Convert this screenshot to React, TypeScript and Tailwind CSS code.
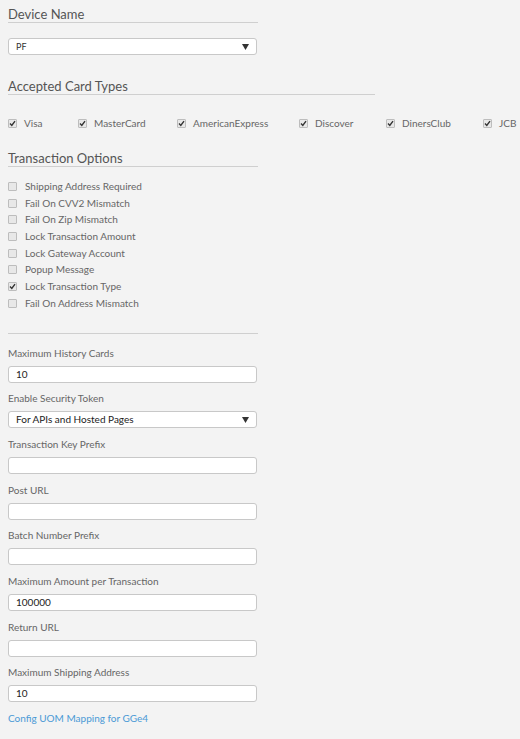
import React from 'react'

const cardTypes = [
  { name: 'Visa', w: 'w-[70px]' },
  { name: 'MasterCard', w: 'w-[99px]' },
  { name: 'AmericanExpress', w: 'w-[122px]' },
  { name: 'Discover', w: 'w-[87px]' },
  { name: 'DinersClub', w: 'w-[97px]' },
  { name: 'JCB', w: 'w-[30px]' },
]

const options = [
  { label: 'Shipping Address Required', checked: false },
  { label: 'Fail On CVV2 Mismatch', checked: false },
  { label: 'Fail On Zip Mismatch', checked: false },
  { label: 'Lock Transaction Amount', checked: false },
  { label: 'Lock Gateway Account', checked: false },
  { label: 'Popup Message', checked: false },
  { label: 'Lock Transaction Type', checked: true },
  { label: 'Fail On Address Mismatch', checked: false },
]

const fields = [
  { label: 'Maximum History Cards', value: '10' },
  { label: 'Enable Security Token', value: 'For APIs and Hosted Pages', select: true },
  { label: 'Transaction Key Prefix', value: '' },
  { label: 'Post URL', value: '' },
  { label: 'Batch Number Prefix', value: '' },
  { label: 'Maximum Amount per Transaction', value: '100000' },
  { label: 'Return URL', value: '' },
  { label: 'Maximum Shipping Address', value: '10' },
]

function Check({ checked }: { checked: boolean }) {
  return (
    <span className="w-[9px] h-[9px] shrink-0 rounded-[1px] border border-[#bdbdbd] bg-[#e8e8e8] flex items-center justify-center">
      {checked && (
        <svg width="7" height="7" viewBox="0 0 7 7">
          <path d="M1 3.6 L2.8 5.4 L6 1.2" stroke="#333" strokeWidth="1.4" fill="none" />
        </svg>
      )}
    </span>
  )
}

function Heading({ text, wide }: { text: string; wide?: boolean }) {
  return (
    <div
      className={`${wide ? 'w-[367px]' : 'w-[250px]'} text-[13px] leading-[16px] text-[#555] border-b border-[#cfcfcf]`}
    >
      {text}
    </div>
  )
}

function Arrow() {
  return (
    <svg width="7" height="6" viewBox="0 0 7 6" className="shrink-0">
      <path d="M0 0 H7 L3.5 6 Z" fill="#333" />
    </svg>
  )
}

export default function App() {
  return (
    <div
      className="min-h-[739px] bg-[#f3f3f3] px-[8px] pt-[6px] text-[#666]"
      style={{ fontFamily: 'Lato, "Open Sans", sans-serif' }}
    >
      {/* Device */}
      <Heading text="Device Name" />
      <div className="mt-[15px] w-[249px] h-[17px] bg-white border border-[#c8c8c8] rounded-[3px] flex items-center justify-between pl-[7px] pr-[7px]">
        <span className="text-[9px] text-[#333]">PF</span>
        <Arrow />
      </div>

      {/* Card types */}
      <div className="mt-[23px]">
        <Heading text="Accepted Card Types" wide />
      </div>
      <div className="mt-[22px] flex h-[12px] items-center">
        {cardTypes.map(c => (
          <div key={c.name} className={`${c.w} shrink-0 flex items-center gap-[7px]`}>
            <Check checked />
            <span className="text-[10px] leading-[12px] text-[#666]">{c.name}</span>
          </div>
        ))}
      </div>

      {/* Transaction options */}
      <div className="mt-[21px]">
        <Heading text="Transaction Options" />
      </div>
      <div className="mt-[11px]">
        {options.map(o => (
          <div key={o.label} className="h-[16.7px] flex items-center gap-[8px]">
            <Check checked={o.checked} />
            <span className="text-[10px] text-[#666]">{o.label}</span>
          </div>
        ))}
      </div>

      <div className="mt-[21px] w-[250px] border-t border-[#cfcfcf]" />

      {/* Fields */}
      <div className="mt-[12px]">
        {fields.map(f => (
          <div key={f.label} className="mb-[8.7px]">
            <div className="text-[10px] leading-[14px] text-[#666] mb-[6px]">{f.label}</div>
            <div className="w-[249px] h-[17px] bg-white border border-[#c8c8c8] rounded-[3px] flex items-center justify-between px-[7px]">
              <span className="text-[10px] text-[#222]">{f.value}</span>
              {f.select && <Arrow />}
            </div>
          </div>
        ))}
      </div>
      <a href="#" className="block text-[10px] leading-[14px] text-[#4a9ad6] mt-[5px]">
        Config UOM Mapping for GGe4
      </a>
    </div>
  )
}
